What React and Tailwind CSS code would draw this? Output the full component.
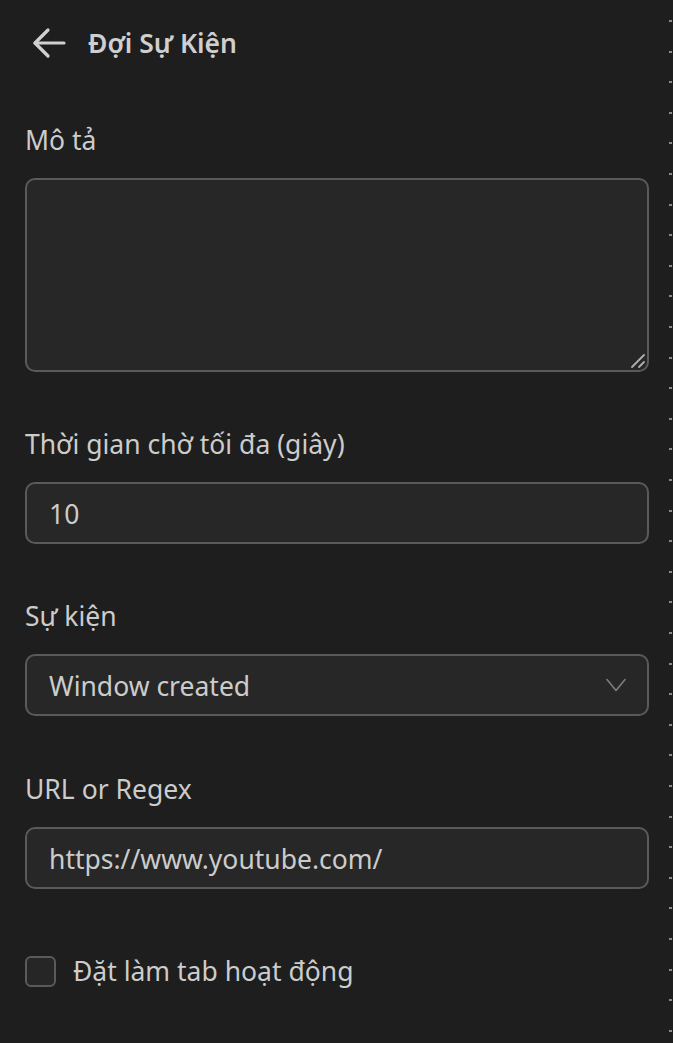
import React from "react";

const font = { fontFamily: '"Noto Sans", "Open Sans", sans-serif' };

function Field({ label, children, className = "" }) {
  return (
    <div className={"flex flex-col " + className}>
      <div className="text-[26.5px] leading-[34px] text-[#cccccc] mb-[21px]">{label}</div>
      {children}
    </div>
  );
}

export default function App() {
  return (
    <div className="w-[673px] h-[1043px] bg-[#1e1e1e] flex overflow-hidden" style={font}>
      <div className="flex-1 flex flex-col pl-[25px] pr-[20px]">
        <div className="flex items-center h-[88px] pb-[2px]">
          <svg width="34" height="32" viewBox="0 0 34 32" className="ml-[7px] mr-[22px]" fill="none" stroke="#d0d0d0" strokeWidth="3.2" strokeLinecap="round" strokeLinejoin="round">
            <path d="M32 16H3" />
            <path d="M16 3L3 16l13 13" />
          </svg>
          <span className="text-[26.5px] font-semibold text-[#cfcfcf] leading-none">Đợi Sự Kiện</span>
        </div>

        <Field label="Mô tả" className="mt-[35px]">
          <div className="relative">
            <textarea className="block h-[194px] w-full resize-none rounded-[10px] border-2 border-[#5a5a5a] bg-[#272727] outline-none text-[26.5px] text-[#cccccc] px-[22px] py-[12px]" style={font} />
            <svg width="16" height="16" viewBox="0 0 16 16" className="absolute right-[3px] bottom-[3px]" fill="none" stroke="#b0b0b0" strokeWidth="1.8" strokeLinecap="round">
              <path d="M2 14L14 2" />
              <path d="M9 14L14 9" />
            </svg>
          </div>
        </Field>

        <Field label="Thời gian chờ tối đa (giây)" className="mt-[55px]">
          <div className="h-[62px] rounded-[10px] border-2 border-[#5a5a5a] bg-[#272727] flex items-center px-[22px] pt-[3px] text-[26.5px] text-[#cccccc]">10</div>
        </Field>

        <Field label="Sự kiện" className="mt-[55px]">
          <div className="h-[62px] rounded-[10px] border-2 border-[#5a5a5a] bg-[#272727] flex items-center justify-between pl-[22px] pr-[21px] text-[26.5px] text-[#cccccc]">
            <span className="pt-[3px]">Window created</span>
            <svg width="20" height="14" viewBox="0 0 20 14" fill="none" stroke="#7e7e7e" strokeWidth="1.6" strokeLinecap="round" strokeLinejoin="round">
              <path d="M1 1.5l9 11 9-11" />
            </svg>
          </div>
        </Field>

        <Field label="URL or Regex" className="mt-[56px]">
          <div className="h-[62px] rounded-[10px] border-2 border-[#5a5a5a] bg-[#272727] flex items-center px-[22px] pt-[3px] text-[26.5px] text-[#cccccc]">https://www.youtube.com/</div>
        </Field>

        <div className="flex items-center mt-[65px]">
          <div className="w-[31px] h-[31px] rounded-[6px] border-2 border-[#5a5a5a] bg-[#262626]" />
          <span className="ml-[17px] text-[26.5px] leading-[34px] text-[#cccccc]">Đặt làm tab hoạt động</span>
        </div>
      </div>
      <div className="w-[3px] mr-[1px] flex flex-col pt-[20px]">
        <div className="flex-1 w-[3px] bg-[repeating-linear-gradient(to_bottom,#8a8a8a_0px,#8a8a8a_2px,transparent_2px,transparent_30.6px)]" />
      </div>
    </div>
  );
}
